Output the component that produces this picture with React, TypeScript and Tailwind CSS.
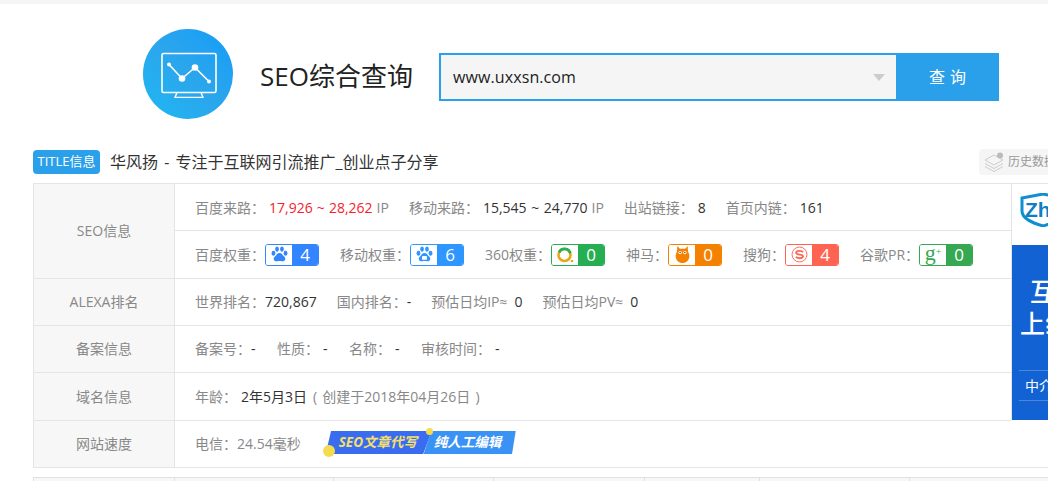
import type { ReactNode } from "react";

const FONT = "font-['Open_Sans','Noto_Sans_CJK_SC',sans-serif]";

function Paw({ mobile }: { mobile?: boolean }) {
  return (
    <svg viewBox="0 0 18 18" className="w-[17px] h-[17px]" fill={mobile ? "#2e96ff" : "#3385ff"}>
      <ellipse cx="2.6" cy="7.6" rx="2" ry="2.6" />
      <ellipse cx="6.4" cy="3.2" rx="2" ry="2.8" />
      <ellipse cx="11.6" cy="3.2" rx="2" ry="2.8" />
      <ellipse cx="15.4" cy="7.6" rx="2" ry="2.6" />
      <path d="M9 7.4c2.4 0 3.2 2.2 4.6 3.4 1.5 1.2 1.8 2.4 1.3 3.7-.6 1.6-2.5 1.9-3.6 1.6-1.5-.3-3-.3-4.6 0-1.2.3-3 0-3.6-1.6-.5-1.3-.1-2.5 1.3-3.7C5.8 9.6 6.6 7.4 9 7.4z" />
      {mobile && <rect x="6.4" y="10.6" width="5.2" height="4" rx="0.6" fill="#fff" />}
    </svg>
  );
}

function Ring() {
  return (
    <svg viewBox="0 0 18 18" className="w-[18px] h-[18px]" fill="none">
      <circle cx="8.5" cy="9" r="6" stroke="#e6a817" strokeWidth="2.6" />
      <path d="M3 6.400A6 6 0 0 1 14.300 7.400" stroke="#2eae55" strokeWidth="2.6" />
      <circle cx="16" cy="15" r="1.300" fill="#e6a817" />
    </svg>
  );
}

function Owl() {
  return (
    <svg viewBox="0 0 18 20" className="w-[17px] h-[19px]" fill="#f48200">
      <path d="M3.600 1l2.600 3h5.600l2.600-3 .5 6c1.300 2 1.700 4.500 1 7-.8 3-3.600 5-6.900 5s-6.100-2-6.900-5c-.7-2.500-.3-5 1-7z" />
      <circle cx="6.500" cy="8" r="1.800" fill="#fff" />
      <circle cx="11.500" cy="8" r="1.800" fill="#fff" />
      <circle cx="6.500" cy="8" r=".8" fill="#7a3f00" />
      <circle cx="11.500" cy="8" r=".8" fill="#7a3f00" />
    </svg>
  );
}

function SogouIcon() {
  return (
    <svg viewBox="0 0 18 18" className="w-[17px] h-[17px]" fill="none">
      <circle cx="9" cy="9" r="7.900" stroke="#ff6453" strokeWidth="1" />
      <path d="M12.700 6.600C12 5.600 10.600 5.200 9 5.200c-2 0-3.500.8-3.500 2 0 2.800 7.200 1 7.200 3.700 0 1.200-1.500 2-3.700 2-1.700 0-3.100-.5-3.900-1.500" stroke="#ff6453" strokeWidth="2" />
    </svg>
  );
}

function Badge({
  icon,
  value,
  border,
  fill,
}: {
  icon: ReactNode;
  value: string;
  border: string;
  fill: string;
}) {
  return (
    <span className={`flex w-[54px] h-[22px] rounded-[3px] border overflow-hidden ${border}`}>
      <span className="w-[26px] flex items-center justify-center bg-white">{icon}</span>
      <span className={`flex-1 flex items-center justify-center text-white text-[17px] leading-none ${fill}`}>
        {value}
      </span>
    </span>
  );
}

function Row({
  label,
  children,
  height,
}: {
  label: string;
  children: ReactNode;
  height: string;
}) {
  return (
    <div className={`flex border-b border-[#e5e5e5] ${height}`}>
      <div className="w-[141px] shrink-0 bg-[#f7f7f7] border-r border-[#e5e5e5] flex items-center justify-center text-sm text-[#888]">
        {label}
      </div>
      <div className="flex-1 min-w-0 flex flex-col">{children}</div>
    </div>
  );
}

// spaced: the reference leaves a few extra pixels after the colon on some fields
function Stat({
  label,
  spaced,
  children,
}: {
  label: string;
  spaced?: boolean;
  children: ReactNode;
}) {
  return (
    <span className="flex items-center whitespace-nowrap">
      <span className={`text-[#888] ${spaced ? "mr-1" : ""}`}>{label}</span>
      {children}
    </span>
  );
}

function BannerAd() {
  return (
    <div className="w-[200px] shrink-0 h-[236px] border-l border-[#e5e5e5] flex flex-col overflow-hidden">
      <div className="h-[61px] bg-white pl-[8px] pt-[9px]">
        <svg viewBox="0 0 46 34" className="w-[46px] h-[34px]">
          <path d="M23 1l21 4v13c0 8-11 12-21 15C13 30 2 26 2 18V5z" fill="#fff" stroke="#0e8fd0" strokeWidth="3" />
          <text x="5" y="24" fontSize="21" fontWeight="700" fill="#0e7fc4" fontFamily="Liberation Sans, sans-serif">
            Zhi
          </text>
        </svg>
      </div>
      <div className="flex-1 bg-[#1262d4] text-white">
        <div className="pl-[18px] pt-[30px] text-[25px] leading-[32px] font-medium whitespace-nowrap">互联网</div>
        <div className="pl-[8px] text-[25px] leading-[32px] font-medium whitespace-nowrap">上线了</div>
        <div className="mt-[31px] border-y border-[#4d86dd] h-[31px] ml-[7px] pl-[6px] text-sm leading-[29px] whitespace-nowrap">
          中介服务
        </div>
      </div>
    </div>
  );
}

export default function App() {
  return (
    <div className={`w-[1048px] h-[481px] overflow-hidden bg-white ${FONT}`}>
      <div className="h-1 bg-[#f5f5f5]" />

      <div className="flex items-center h-[90px] mt-[25px] pl-[143px]">
        <div className="w-[90px] h-[90px] rounded-full bg-gradient-to-tr from-[#1cb8f3] via-[#2ba6ec] to-[#129cf8] flex items-center justify-center">
          <svg viewBox="0 0 58 47" className="w-[58px] h-[47px]" fill="none" stroke="#fff">
            <rect x="3" y="2.500" width="54" height="39" rx="1.500" strokeWidth="1.600" />
            <path d="M18 41.500l-2 5h28l-2-5" strokeWidth="1.400" />
            <path d="M10 13.500l13 14 13-11 14 14" strokeWidth="1.600" />
            <circle cx="10" cy="13.500" r="2" fill="#fff" stroke="none" />
            <circle cx="23" cy="27.500" r="3.300" fill="#fff" stroke="none" />
            <circle cx="36" cy="16.500" r="3.300" fill="#fff" stroke="none" />
            <circle cx="50" cy="30.500" r="2" fill="#fff" stroke="none" />
          </svg>
        </div>
        <div className="ml-[27px] mt-[4px] w-[179px] text-[26px] text-[#222] whitespace-nowrap">SEO综合查询</div>
        <div className="flex h-[48px] mt-[6px]">
          <div className="w-[459px] border-2 border-[#2ba0ea] bg-[#f5f5f5] flex items-center pl-[12px] pr-[11px]">
            <span className="flex-1 text-[16px] tracking-[0.1px] text-[#222]">www.uxxsn.com</span>
            <span className="w-0 h-0 border-x-[6px] border-x-transparent border-t-[7px] border-t-[#ccc]" />
          </div>
          <div className="w-[101px] bg-[#2ba0ea] text-white text-base tracking-[5px] pl-[3px] flex items-center justify-center">
            查询
          </div>
        </div>
      </div>

      <div className="flex items-center h-[26px] mt-[30px] pl-[33px]">
        <span className="w-[67px] shrink-0 h-[24px] rounded-sm bg-[#2ba0ea] text-white text-[13px] flex items-center justify-center whitespace-nowrap">
          TITLE信息
        </span>
        <span className="ml-[10px] w-[869px] shrink-0 text-base [word-spacing:2px] text-[#333] whitespace-nowrap">
          华风扬 - 专注于互联网引流推广_创业点子分享
        </span>
        <div className="w-[100px] shrink-0 h-[26px] rounded-sm bg-[#f5f5f5] flex items-center pl-[5px] gap-[4px] text-xs text-[#999] whitespace-nowrap">
          <svg viewBox="0 0 20 20" className="w-[20px] h-[20px]" fill="none" stroke="#ccc">
            <path d="M1 8l9-5 9 5-9 5zM1 11.500l9 5 9-5M1 14.500l9 5 9-5" strokeWidth="1" />
            <circle cx="16" cy="3.500" r="3" fill="#bbb" stroke="none" />
          </svg>
          历史数据
        </div>
      </div>

      <div className="ml-[33px] mt-[8px] w-[1200px] border-l border-t border-[#e5e5e5]">
        <div className="flex">
          <div className="w-[977px] shrink-0">
            <Row label="SEO信息" height="h-[95px]">
              <div className="h-[47px] border-b border-[#e5e5e5] flex items-center gap-[20px] pl-[20px] pt-[2px] text-sm">
                <Stat label="百度来路：" spaced>
                  <span className="text-[#f5222d] [word-spacing:0.500px]">17,926 ~ 28,262</span>
                  <span className="text-[#888] ml-1">IP</span>
                </Stat>
                <Stat label="移动来路：" spaced>
                  <span className="text-[#333] [word-spacing:1px]">15,545 ~ 24,770</span>
                  <span className="text-[#888] ml-1">IP</span>
                </Stat>
                <Stat label="出站链接：" spaced>
                  <span className="text-[#333]">8</span>
                </Stat>
                <Stat label="首页内链：" spaced>
                  <span className="text-[#333]">161</span>
                </Stat>
              </div>
              <div className="flex-1 flex items-center gap-[21px] pl-[20px] text-sm">
                <Stat label="百度权重：">
                  <Badge icon={<Paw />} value="4" border="border-[#3385ff]" fill="bg-[#3385ff]" />
                </Stat>
                <Stat label="移动权重：">
                  <Badge icon={<Paw mobile />} value="6" border="border-[#2e96ff]" fill="bg-[#2e96ff]" />
                </Stat>
                <Stat label="360权重：">
                  <Badge icon={<Ring />} value="0" border="border-[#26ae52]" fill="bg-[#26ae52]" />
                </Stat>
                <Stat label="神马：">
                  <Badge icon={<Owl />} value="0" border="border-[#f48200]" fill="bg-[#f48200]" />
                </Stat>
                <Stat label="搜狗：">
                  <Badge icon={<SogouIcon />} value="4" border="border-[#ff6453]" fill="bg-[#ff6453]" />
                </Stat>
                <Stat label="谷歌PR：">
                  <Badge
                    icon={<span className="font-['Liberation_Serif',serif] text-[22px] leading-none text-[#36a852] -mt-1">g<sup className="text-[10px]">+</sup></span>}
                    value="0"
                    border="border-[#36a852]"
                    fill="bg-[#36a852]"
                  />
                </Stat>
              </div>
            </Row>
            <Row label="ALEXA排名" height="h-[47px]">
              <div className="flex-1 flex items-center gap-[20px] pl-[20px] text-sm">
                <Stat label="世界排名：">
                  <span className="text-[#333]">720,867</span>
                </Stat>
                <Stat label="国内排名：">
                  <span className="text-[#333]">-</span>
                </Stat>
                <Stat label="预估日均IP≈">
                  <span className="text-[#333] ml-[7px]">0</span>
                </Stat>
                <Stat label="预估日均PV≈">
                  <span className="text-[#333] ml-[7px]">0</span>
                </Stat>
              </div>
            </Row>
            <Row label="备案信息" height="h-[47px]">
              <div className="flex-1 flex items-center gap-[21.500px] pl-[20px] text-sm">
                <Stat label="备案号：">
                  <span className="text-[#333]">-</span>
                </Stat>
                <Stat label="性质：" spaced>
                  <span className="text-[#333]">-</span>
                </Stat>
                <Stat label="名称：" spaced>
                  <span className="text-[#333]">-</span>
                </Stat>
                <Stat label="审核时间：" spaced>
                  <span className="text-[#333]">-</span>
                </Stat>
              </div>
            </Row>
            <Row label="域名信息" height="h-[48px]">
              <div className="flex-1 flex items-center pl-[20px] text-sm">
                <Stat label="年龄：" spaced>
                  <span className="text-[#333]">2年5月3日</span>
                  <span className="text-[#888] ml-[6px] [word-spacing:1.500px]">( 创建于2018年04月26日 )</span>
                </Stat>
              </div>
            </Row>
          </div>
          <BannerAd />
        </div>
        <Row label="网站速度" height="h-[47px]">
          <div className="flex-1 flex items-center pl-[20px] text-sm">
            <Stat label="电信：24.54毫秒">
              <span className="relative ml-[25px] -mt-[3px] flex h-[23px] text-[13.500px] font-bold italic whitespace-nowrap">
                <span className="w-[106px] bg-[#3a6cf0] text-[#f5e06a] pl-[13px] flex items-center [clip-path:polygon(5%_0,100%_0,92%_100%,0_100%)]">
                  SEO文章代写
                </span>
                <span className="w-[92px] -ml-[8px] bg-[#3a92f5] text-white pl-[10px] flex items-center [clip-path:polygon(8%_0,100%_0,96%_100%,0_100%)]">
                  纯人工编辑
                </span>
                <span className="absolute -left-[3px] bottom-[-3px] w-[12px] h-[12px] rounded-full bg-[#f5dc4f]" />
                <span className="absolute left-[100px] top-[-3px] w-[7px] h-[7px] rounded-full bg-[#f5dc4f]" />
              </span>
            </Stat>
          </div>
        </Row>
      </div>

      <div className="ml-[33px] mt-[9px] w-[1200px] h-[10px] bg-[#f7f7f7] border-t border-l border-[#e0e0e0] flex">
        <div className="w-[141px] border-r border-[#e0e0e0]" />
        <div className="w-[159px] border-r border-[#e0e0e0]" />
        <div className="w-[160px] border-r border-[#e0e0e0]" />
        <div className="w-[151px] border-r border-[#e0e0e0]" />
        <div className="w-[115px] border-r border-[#e0e0e0]" />
        <div className="w-[150px] border-r border-[#e0e0e0]" />
      </div>
    </div>
  );
}
